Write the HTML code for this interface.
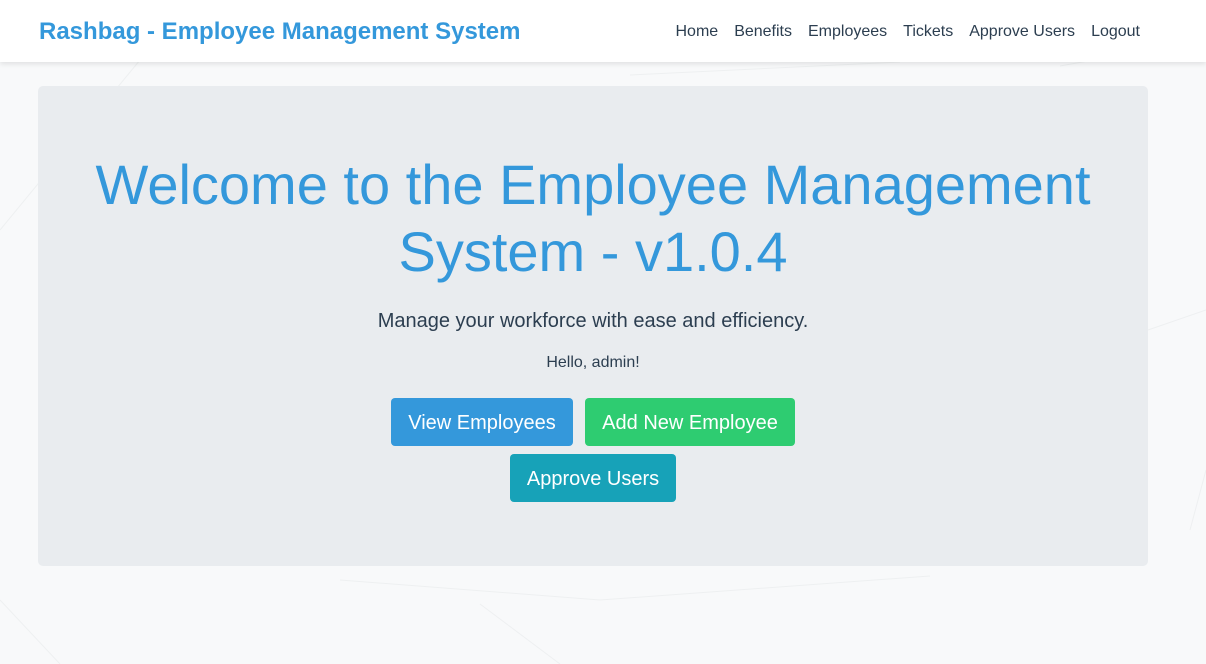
<!DOCTYPE html>
<html><head><meta charset="utf-8"><style>
*{margin:0;padding:0;box-sizing:border-box}
body{width:1206px;height:664px;overflow:hidden;background:#f8f9fa;font-family:"Liberation Sans",Arial,sans-serif;position:relative}
.nav{position:absolute;left:0;top:0;width:1206px;height:62px;background:#fff;box-shadow:0 2px 5px rgba(0,0,0,0.1)}
.brand{position:absolute;left:39px;top:18px;font-size:24px;font-weight:bold;color:#3498db}
.links{position:absolute;right:66px;top:23px;font-size:16px;color:#2c3e50;display:flex;gap:16px}
.jumbo{position:absolute;left:38px;top:86px;width:1110px;height:480px;background:#e9ecef;border-radius:5px;text-align:center}
h1{position:absolute;left:0;right:0;top:65px;font-weight:normal;font-size:56px;line-height:67px;color:#3498db}
.sub{position:absolute;left:0;right:0;top:224px;font-size:20px;color:#2c3e50}
.hello{position:absolute;left:0;right:0;top:268px;font-size:16px;color:#2c3e50}
.btn{position:absolute;height:48px;line-height:50px;color:#fff;font-size:20px;border-radius:4px;text-align:center}
</style></head><body>
<svg style="position:absolute;left:0;top:0" width="1206" height="664">
<g stroke="#eef0f1" stroke-width="1" fill="none">
<line x1="0" y1="230" x2="140" y2="60"/><line x1="630" y1="75" x2="900" y2="62"/><line x1="1060" y1="66" x2="1206" y2="40"/>
<line x1="340" y1="580" x2="600" y2="600"/><line x1="600" y1="600" x2="930" y2="576"/><line x1="480" y1="604" x2="560" y2="664"/>
<line x1="1148" y1="330" x2="1206" y2="310"/><line x1="1190" y1="530" x2="1206" y2="470"/><line x1="0" y1="600" x2="60" y2="664"/>
</g></svg>
<div class="nav"><div class="brand">Rashbag - Employee Management System</div>
<div class="links"><span>Home</span><span>Benefits</span><span>Employees</span><span>Tickets</span><span>Approve Users</span><span>Logout</span></div></div>
<div class="jumbo">
<h1>Welcome to the Employee Management<br>System - v1.0.4</h1>
<div class="sub">Manage your workforce with ease and efficiency.</div>
<div class="hello">Hello, admin!</div>
<div class="btn" style="left:353px;top:312px;width:182px;background:#3498db">View Employees</div>
<div class="btn" style="left:547px;top:312px;width:210px;background:#2ecc71">Add New Employee</div>
<div class="btn" style="left:472px;top:368px;width:166px;background:#17a2b8">Approve Users</div>
</div>
</body></html>
